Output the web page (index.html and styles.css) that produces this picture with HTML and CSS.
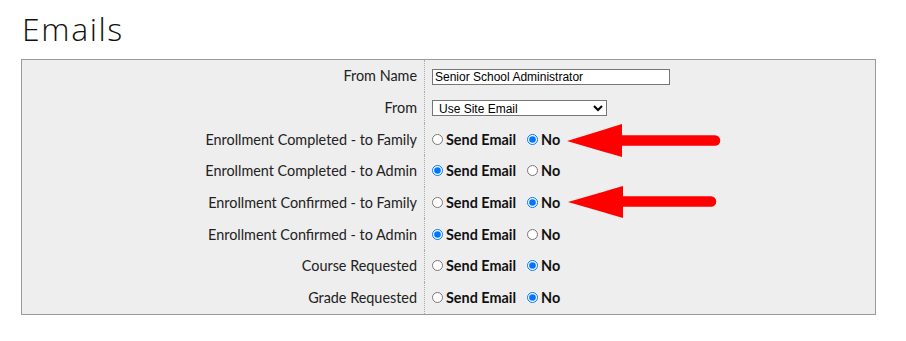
FILE: index.html
```html
<!DOCTYPE html>
<html>
<head>
<meta charset="utf-8">
<link rel="stylesheet" href="styles.css">
</head>
<body>
<div class="page">
  <h1 class="title">Emails</h1>
  <div class="panel">
    <table class="form">
      <tr>
        <td class="label">From Name</td>
        <td class="value"><input class="text" type="text" value="Senior School Administrator"></td>
      </tr>
      <tr>
        <td class="label">From</td>
        <td class="value"><select class="sel"><option>Use Site Email</option></select></td>
      </tr>
      <tr>
        <td class="label">Enrollment Completed - to Family</td>
        <td class="value"><label class="opt"><input type="radio" name="r1">Send Email</label><label class="opt"><input type="radio" name="r1" checked>No</label></td>
      </tr>
      <tr>
        <td class="label">Enrollment Completed - to Admin</td>
        <td class="value"><label class="opt"><input type="radio" name="r2" checked>Send Email</label><label class="opt"><input type="radio" name="r2">No</label></td>
      </tr>
      <tr>
        <td class="label">Enrollment Confirmed - to Family</td>
        <td class="value"><label class="opt"><input type="radio" name="r3">Send Email</label><label class="opt"><input type="radio" name="r3" checked>No</label></td>
      </tr>
      <tr>
        <td class="label">Enrollment Confirmed - to Admin</td>
        <td class="value"><label class="opt"><input type="radio" name="r4" checked>Send Email</label><label class="opt"><input type="radio" name="r4">No</label></td>
      </tr>
      <tr>
        <td class="label">Course Requested</td>
        <td class="value"><label class="opt"><input type="radio" name="r5">Send Email</label><label class="opt"><input type="radio" name="r5" checked>No</label></td>
      </tr>
      <tr>
        <td class="label">Grade Requested</td>
        <td class="value"><label class="opt"><input type="radio" name="r6">Send Email</label><label class="opt"><input type="radio" name="r6" checked>No</label></td>
      </tr>
    </table>
    <svg class="arrow arrow1" width="160" height="36" viewBox="0 0 160 36">
      <polygon points="0,17 55,0 55,33" fill="#ff0000"/>
      <line x1="54" y1="16.5" x2="148" y2="16.5" stroke="#ff0000" stroke-width="10.5" stroke-linecap="round"/>
    </svg>
    <svg class="arrow arrow2" width="160" height="36" viewBox="0 0 160 36">
      <polygon points="0,17 55,1 55,33" fill="#ff0000"/>
      <line x1="54" y1="16.5" x2="143" y2="16.5" stroke="#ff0000" stroke-width="10.5" stroke-linecap="round"/>
    </svg>
  </div>
</div>
</body>
</html>
```
FILE: styles.css
```css
html, body {
  margin: 0;
  padding: 0;
  background: #ffffff;
}
.page {
  padding: 9px 30px 0 21px;
}
.title {
  margin: 0 0 0 1px;
  font-family: "Open Sans", sans-serif;
  font-weight: 300;
  font-size: 32px;
  line-height: 40px;
  color: #111;
  letter-spacing: 1.6px;
  height: 50px;
}
.panel {
  position: relative;
  width: 853px;
  border: 1px solid #9a9a9a;
  background: #eeeeee;
}
.form {
  border-collapse: collapse;
  width: 100%;
}
.form td {
  height: 31.7px;
  padding: 0;
  vertical-align: middle;
  font-family: Lato, "Open Sans", sans-serif;
  font-size: 14.4px;
  color: #222;
}
.label {
  width: 395px;
  text-align: right;
  padding-right: 7px !important;
  border-right: 1px dotted #aaaaaa;
}
.value {
  padding-left: 7px !important;
}
.text {
  box-sizing: border-box;
  width: 238px;
  height: 16px;
  margin: 0;
  padding: 0 2px;
  border: 1px solid #767676;
  font-family: "Liberation Sans", Arial, sans-serif;
  font-size: 12px;
  color: #000;
  background: #fff;
}
.sel {
  box-sizing: border-box;
  width: 175px;
  height: 16px;
  margin: 0;
  padding: 0 2px;
  border: 1px solid #767676;
  border-radius: 0;
  font-family: "Liberation Sans", Arial, sans-serif;
  font-size: 12px;
  color: #000;
  background: #fff;
}
.opt {
  display: inline-flex;
  align-items: center;
  font-weight: bold;
  color: #111;
  margin-right: 11px;
}
.opt input {
  width: 11px;
  height: 11px;
  margin: 0 3px 0 0;
}
.arrow {
  position: absolute;
}
.arrow1 {
  left: 545px;
  top: 64px;
}
.arrow2 {
  left: 546px;
  top: 125px;
}
```
